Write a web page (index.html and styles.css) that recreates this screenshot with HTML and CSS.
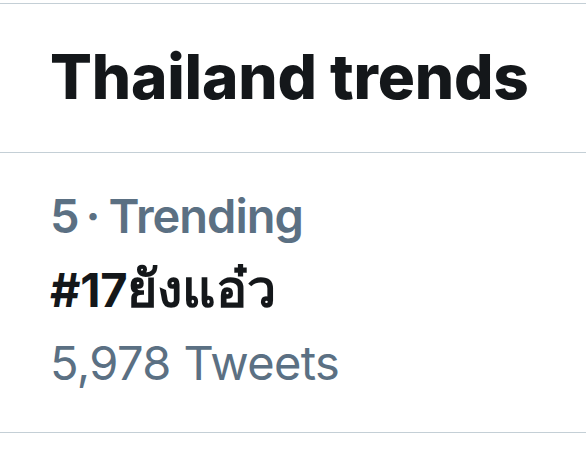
FILE: index.html
```html
<!DOCTYPE html>
<html lang="th">
<head>
<meta charset="utf-8">
<link rel="stylesheet" href="styles.css">
</head>
<body>
<div class="panel">
  <div class="header">
    <h1 class="title">Thailand trends</h1>
  </div>
  <div class="trend">
    <div class="meta">5<span class="dot">·</span>Trending</div>
    <div class="tag">#17<span class="thai">ยังแอ๋ว</span></div>
    <div class="count">5,978 Tweets</div>
  </div>
</div>
</body>
</html>
```
FILE: styles.css
```css
html, body {
  margin: 0;
  padding: 0;
  background: #ffffff;
}
body {
  font-family: Inter, "Noto Sans", "DejaVu Sans", sans-serif;
  width: 586px;
  height: 476px;
  overflow: hidden;
}
.panel {
  padding-top: 3px;
}
.header {
  border-top: 1px solid #c4cfd6;
  border-bottom: 1px solid #c4cfd6;
  padding: 42px 40px 44px 50px;
}
.title {
  margin: 0;
  font-size: 62px;
  line-height: 62px;
  font-weight: 800;
  color: #14171a;
  white-space: nowrap;
  letter-spacing: -0.2px;
}
.trend {
  padding: 26px 50px 33px;
  border-bottom: 1px solid #c4cfd6;
  font-size: 47px;
  line-height: 73px;
  white-space: nowrap;
}
.meta, .count {
  color: #5b7083;
}
.meta {
  font-weight: 600;
  letter-spacing: -1px;
}
.dot {
  margin: 0 9px 0 7px;
}
.tag {
  color: #14171a;
  font-weight: 700;
  letter-spacing: -0.3px;
}
.thai {
  font-size: 52px;
  letter-spacing: 0;
}
.count {
  font-weight: 400;
  letter-spacing: -0.6px;
}
```
